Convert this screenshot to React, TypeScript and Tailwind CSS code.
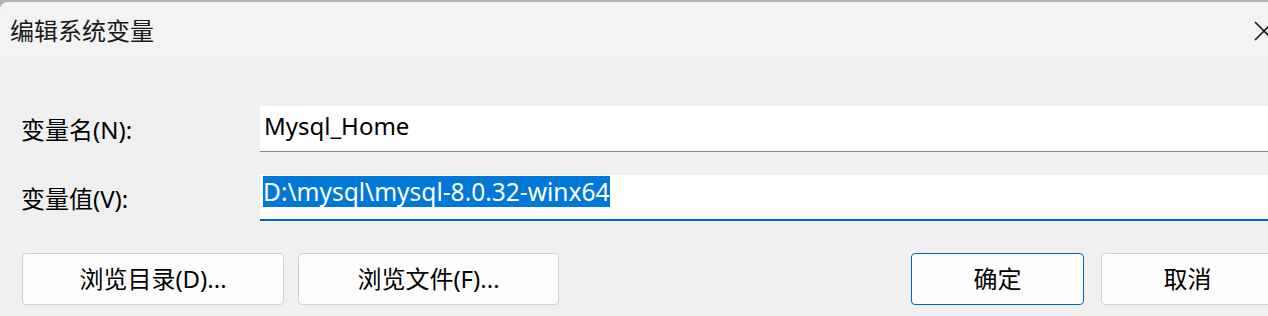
import React from 'react';

const font = { fontFamily: '"Noto Sans", "Noto Sans CJK SC", sans-serif' };

const Field: React.FC<{ label: string; children: React.ReactNode }> = ({ label, children }) => (
  <div className="flex items-center h-[46px]">
    <div className="w-[260px] pl-[21px] text-[24px] text-black leading-none pt-[2px]">{label}</div>
    {children}
  </div>
);

const Button: React.FC<{ text: string; width: string; primary?: boolean }> = ({ text, width, primary }) => (
  <button
    className={`${width} h-[52px] shrink-0 rounded-[4px] bg-[#fdfdfd] text-[24px] text-black leading-none border ${
      primary ? 'border-[#0067c0]' : 'border-[#d0d0d0]'
    }`}
  >
    {text}
  </button>
);

export default function App() {
  return (
    <div className="w-[1268px] h-[316px] overflow-hidden bg-[#b4b4b4]" style={font}>
      <div className="mt-[2px] w-[1290px] h-[314px] rounded-tl-[8px] overflow-hidden bg-[#f0f0f0] flex flex-col">
        {/* title bar */}
        <div className="h-[55px] shrink-0 bg-[#f3f3f3] flex items-center justify-between pl-[10px] pr-[16px]">
          <span className="text-[24px] text-[#1a1a1a] leading-none mt-[2px]">编辑系统变量</span>
          <svg width="20" height="20" viewBox="0 0 20 20" className="mt-[2px]">
            <path d="M1 1 L19 19 M19 1 L1 19" stroke="#1a1a1a" strokeWidth="1.6" fill="none" />
          </svg>
        </div>

        {/* fields */}
        <div className="pt-[49px] flex flex-col gap-[23px]">
          <Field label="变量名(N):">
            <div className="w-[1030px] h-[46px] bg-white border-b border-[#868686] flex items-start pt-[5px] pl-[4px]">
              <span className="text-[24px] text-black leading-[30px]">Mysql_Home</span>
            </div>
          </Field>
          <Field label="变量值(V):">
            <div className="w-[1030px] h-[46px] bg-white border-b-2 border-[#0067c0] flex items-start pt-[1px] pl-[3px]">
              <span className="text-[24.5px] text-white leading-[31px] h-[31px] bg-[#0078d7] pr-[1px]">
                D:\mysql\mysql-8.0.32-winx64
              </span>
            </div>
          </Field>
        </div>

        {/* buttons */}
        <div className="mt-[32px] flex items-center pl-[22px]">
          <Button text="浏览目录(D)..." width="w-[262px]" />
          <div className="w-[14px]" />
          <Button text="浏览文件(F)..." width="w-[261px]" />
          <div className="w-[352px]" />
          <Button text="确定" width="w-[173px]" primary />
          <div className="w-[17px]" />
          <Button text="取消" width="w-[173px]" />
        </div>
      </div>
    </div>
  );
}
